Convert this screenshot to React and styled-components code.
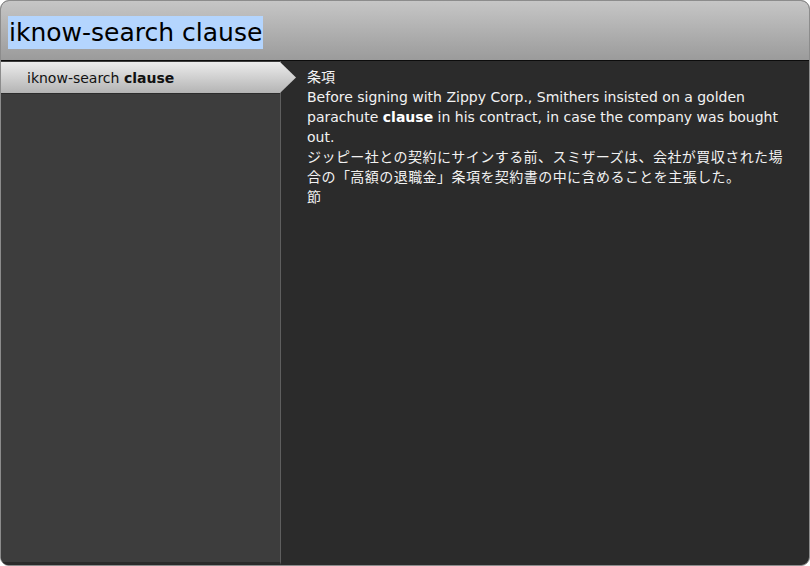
import React from 'react';
import styled, { createGlobalStyle } from 'styled-components';

const GlobalStyle = createGlobalStyle`
  html, body {
    margin: 0;
    padding: 0;
    background: #ffffff;
  }
  body {
    font-family: "DejaVu Sans", "Noto Sans CJK JP", sans-serif;
  }
`;

// outer window with rounded corners
const Window = styled.div`
  box-sizing: border-box;
  width: 810px;
  height: 566px;
  border: 1px solid #8c8c8c;
  border-radius: 9px;
  overflow: hidden;
  display: flex;
  flex-direction: column;
  background: #2b2b2b;
`;

const Header = styled.div`
  box-sizing: border-box;
  height: 60px;
  flex: none;
  display: flex;
  align-items: center;
  padding-left: 7px;
  background: linear-gradient(#c6c6c6, #9b9b9b);
  border-bottom: 1px solid #0c0c0c;
`;

const SearchText = styled.span`
  font-family: "DejaVu Sans", sans-serif;
  font-size: 25px;
  line-height: 33px;
  color: #000;
  background: #b4d5fe;
  padding: 0 1px;
  margin-top: 3px;
`;

const Body = styled.div`
  flex: 1;
  display: flex;
  min-height: 0;
`;

const Sidebar = styled.div`
  width: 279px;
  flex: none;
  background: #3d3d3d;
  border-right: 1px solid #5e5e5e;
  border-bottom: 3px solid #2a2a2a;
  padding-top: 1px;
`;

const ListItem = styled.div`
  position: relative;
  height: 31px;
  display: flex;
  align-items: center;
  padding-left: 26px;
  font-size: 14px;
  color: #111;
  background: ${p => (p.$active ? 'linear-gradient(#ececec, #b4b4b4)' : 'transparent')};
  border-bottom: 1px solid #2c2c2c;

  b {
    font-weight: bold;
  }
`;

// the pointer tip that sticks out of the selected row
const Pointer = styled.span`
  position: absolute;
  right: -16px;
  top: 0;
  width: 16px;
  height: 31px;
  background: linear-gradient(#ececec, #b4b4b4);
  clip-path: polygon(0 0, 100% 50%, 0 100%);
`;

const Content = styled.div`
  flex: 1;
  padding: 6px 24px 0 26px;
  color: #f2f2f2;
  font-size: 14px;
  line-height: 20px;

  b {
    font-weight: bold;
    color: #fff;
  }
`;

const Line = styled.div`
  letter-spacing: ${p => (p.$cjk ? '0.45px' : 'normal')};
`;

export default function App() {
  return (
    <>
      <GlobalStyle />
      <Window>
        <Header>
          <SearchText>iknow-search clause</SearchText>
        </Header>
        <Body>
          <Sidebar>
            <ListItem $active>
              <span>
                iknow-search <b>clause</b>
              </span>
              <Pointer />
            </ListItem>
          </Sidebar>
          <Content>
            <Line>条項</Line>
            <Line>
              Before signing with Zippy Corp., Smithers insisted on a golden parachute <b>clause</b> in his
              contract, in case the company was bought out.
            </Line>
            <Line $cjk>ジッピー社との契約にサインする前、スミザーズは、会社が買収された場合の「高額の退職金」条項を契約書の中に含めることを主張した。</Line>
            <Line>節</Line>
          </Content>
        </Body>
      </Window>
    </>
  );
}
